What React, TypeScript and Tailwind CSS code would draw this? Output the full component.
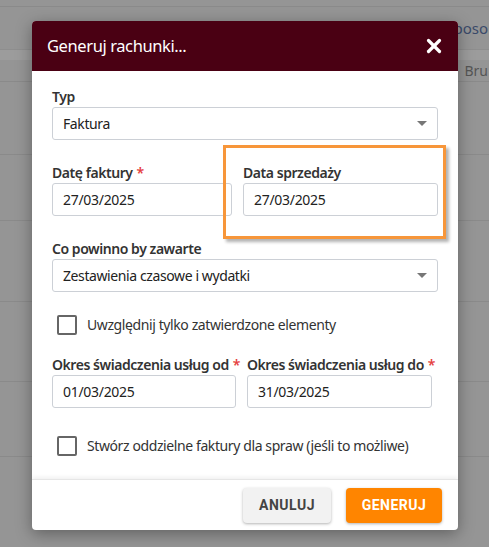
import { X } from 'lucide-react'

const font = { fontFamily: '"Noto Sans", "Open Sans", sans-serif' }

function Label({ text, required }: { text: string; required?: boolean }) {
  return (
    <div className="text-[14px] font-semibold text-[#333] leading-[18px] mb-[1px] whitespace-nowrap tracking-[-0.45px]">
      {text}
      {required && <span className="text-[#e53e3e] ml-[4px]">*</span>}
    </div>
  )
}

function Input({ value }: { value: string }) {
  return (
    <div className="h-[33px] border border-[#ccd0d6] rounded-[3px] px-[10px] flex items-center text-[14px] text-[#222] tracking-[-0.3px]">
      {value}
    </div>
  )
}

function Select({ value }: { value: string }) {
  return (
    <div className="h-[33px] border border-[#ccd0d6] rounded-[3px] pl-[10px] pr-[10px] flex items-center justify-between text-[14px] text-[#222] tracking-[-0.4px]">
      <span>{value}</span>
      <span className="w-0 h-0 border-l-[5px] border-r-[5px] border-t-[5px] border-l-transparent border-r-transparent border-t-[#777]" />
    </div>
  )
}

function Check({ text }: { text: string }) {
  return (
    <div className="flex items-center gap-[10px] pl-[5px]">
      <div className="w-[20px] h-[20px] border-2 border-[#666] rounded-[2px]" />
      <span className="text-[14px] text-[#333] tracking-[-0.4px]">{text}</span>
    </div>
  )
}

export default function App() {
  return (
    <div className="relative w-[489px] h-[547px] bg-[#959595] overflow-hidden" style={font}>
      {/* background page */}
      <div className="flex flex-col">
        <div className="h-[7px] border-b border-[#8a8a8a]" />
        <div className="h-[42px] flex justify-end items-center text-[15px] text-[#3a4a6a] pr-[1px]">poso</div>
        <div className="h-[11px] bg-[#9c9c9c] border-t border-[#8e8e8e]" />
        <div className="h-[22px] border-b border-[#8a8a8a] flex justify-end items-center text-[14px] text-[#555] pr-[1px]">
          <span className="mr-[8px]">4</span>
          <span>Bru</span>
        </div>
        <div className="h-[73px] border-b border-[#8a8a8a]" />
        <div className="h-[66px] border-b border-[#8a8a8a]" />
        <div className="h-[81px] border-b border-[#8a8a8a]" />
        <div className="h-[80px] border-b border-[#8a8a8a]" />
        <div className="h-[75px] border-b border-[#8a8a8a]" />
      </div>

      {/* dialog */}
      <div className="absolute left-[32px] top-[21px] w-[426px] bg-white rounded-[4px] shadow-[0_4px_16px_rgba(0,0,0,0.35)] overflow-hidden">
        <div className="h-[50px] bg-[#4a0013] flex items-center justify-between pl-[15px] pr-[13px]">
          <span className="text-white text-[16.5px] tracking-[-0.4px]">Generuj rachunki...</span>
          <X className="w-[22px] h-[22px] text-white" strokeWidth={3.5} />
        </div>

        <div className="px-[20px] pt-[17px] pb-[23px] flex flex-col">
          <Label text="Typ" />
          <Select value="Faktura" />

          <div className="flex gap-[11px] mt-[24px]">
            <div className="w-[180px]">
              <Label text="Datę faktury" required />
              <Input value="27/03/2025" />
            </div>
            <div className="flex-1">
              <Label text="Data sprzedaży" />
              <Input value="27/03/2025" />
            </div>
          </div>

          <div className="mt-[24px]">
            <Label text="Co powinno by zawarte" />
            <Select value="Zestawienia czasowe i wydatki" />
          </div>

          <div className="mt-[22px]">
            <Check text="Uwzględnij tylko zatwierdzone elementy" />
          </div>

          <div className="flex gap-[11px] mt-[21px]">
            <div className="w-[184px]">
              <Label text="Okres świadczenia usług od" required />
              <Input value="01/03/2025" />
            </div>
            <div className="w-[185px]">
              <Label text="Okres świadczenia usług do" required />
              <Input value="31/03/2025" />
            </div>
          </div>

          <div className="mt-[27px]">
            <Check text="Stwórz oddzielne faktury dla spraw (jeśli to możliwe)" />
          </div>
        </div>

        <div className="h-[51px] border-t border-[#e6e6e6] shadow-[0_-2px_4px_rgba(0,0,0,0.06)] flex items-center justify-end gap-[15px] pr-[16px]" style={{ fontFamily: 'Roboto, sans-serif' }}>
          <button className="h-[35px] w-[88px] rounded-[4px] bg-[#f2f2f2] text-[#444] text-[14px] font-bold tracking-[0.5px] shadow-[0_1px_3px_rgba(0,0,0,0.3)]">
            ANULUJ
          </button>
          <button className="h-[35px] w-[96px] rounded-[4px] bg-[#ff8500] text-white text-[14px] font-bold tracking-[0.5px] shadow-[0_1px_3px_rgba(0,0,0,0.3)]">
            GENERUJ
          </button>
        </div>
      </div>

      {/* annotation */}
      <div className="absolute left-[223px] top-[145px] w-[223px] h-[94px] border-[3px] border-[#f7963a] shadow-[3px_3px_3px_rgba(0,0,0,0.3)]" />
    </div>
  )
}
